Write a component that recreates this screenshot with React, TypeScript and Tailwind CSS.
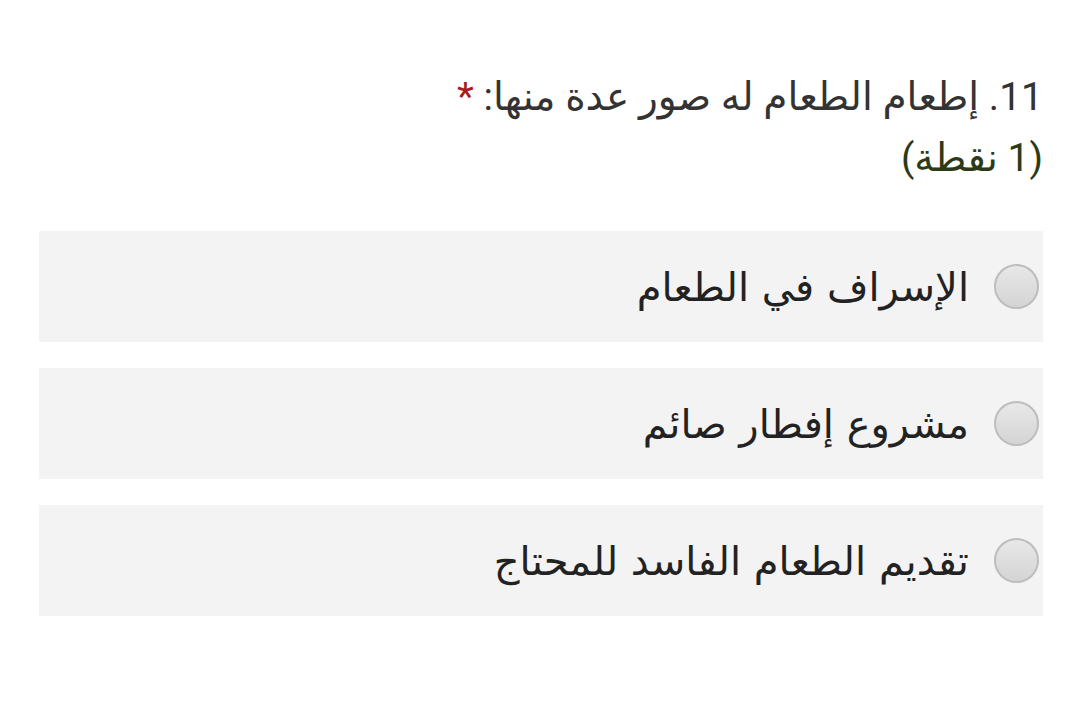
import React from "react";

const options = ["الإسراف في الطعام", "مشروع إفطار صائم", "تقديم الطعام الفاسد للمحتاج"];

const App: React.FC = () => {
  return (
    <div
      dir="rtl"
      className="min-h-screen bg-white pl-[39px] pr-[37px] pt-[67px]"
      style={{ fontFamily: '"DejaVu Sans", "Noto Sans", sans-serif' }}
    >
      {/* question title */}
      <div
        className="text-[39px] leading-[61px] text-[#333333]"
        style={{ fontFamily: 'Roboto, "DejaVu Sans", sans-serif' }}
      >
        <div>
          11. إطعام الطعام له صور عدة منها: <span className="text-[#a61b1b]">*</span>
        </div>
        <div className="text-[#2d3a18]">(1 نقطة)</div>
      </div>

      {/* choices */}
      <div className="mt-[42px] flex flex-col gap-[26px]">
        {options.map((opt) => (
          <div key={opt} className="flex h-[111px] items-center gap-[25px] bg-[#f3f3f3] pr-[4px]">
            <span className="h-[45px] w-[45px] shrink-0 rounded-full border-2 border-[#bdbdbd] bg-gradient-to-b from-[#e8e8e8] to-[#d4d4d4]" />
            <span className="text-[40px] text-[#222222]">{opt}</span>
          </div>
        ))}
      </div>
    </div>
  );
};

export default App;
